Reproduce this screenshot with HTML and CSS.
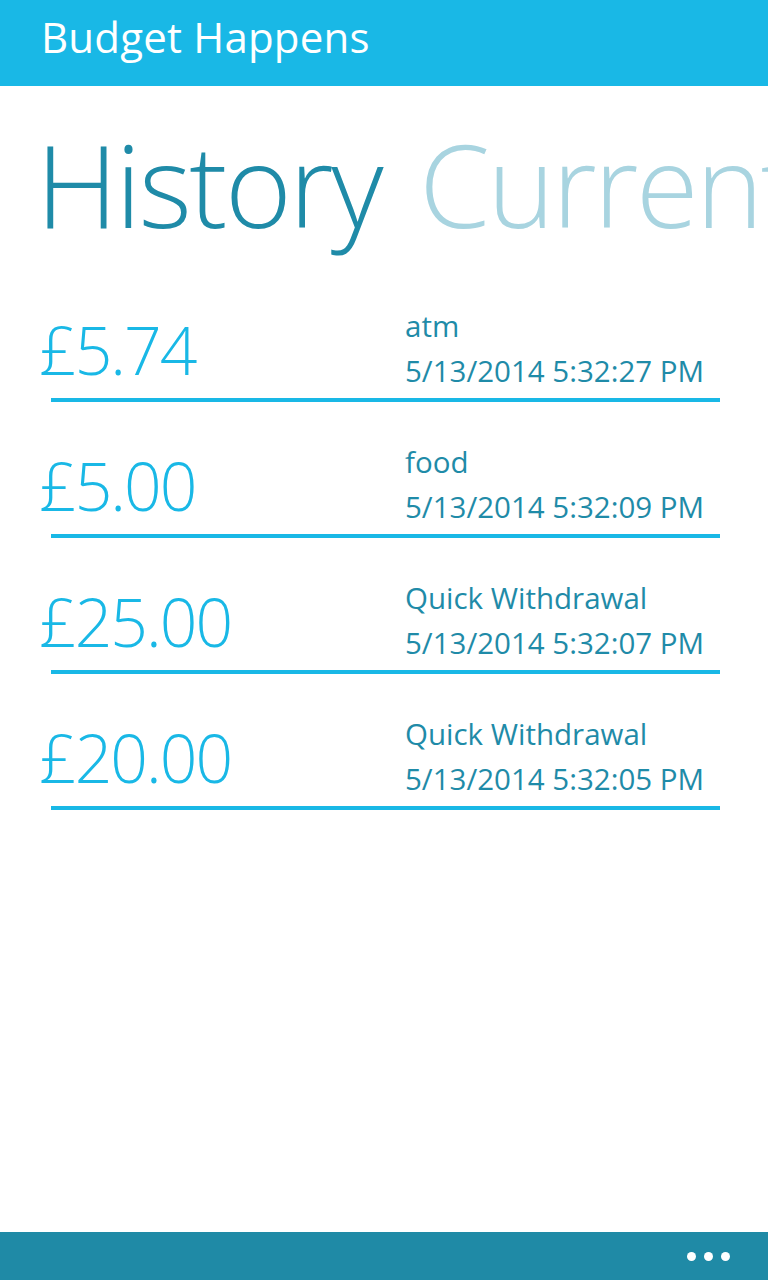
FILE: index.html
```html
<!DOCTYPE html>
<html>
<head>
<meta charset="utf-8">
<link rel="stylesheet" href="styles.css">
</head>
<body>
<div class="app">
  <header class="titlebar">Budget Happens</header>
  <div class="pivot">
    <span class="pivot-item active">History</span>
    <span class="pivot-item">Current</span>
  </div>
  <ul class="list">
    <li class="row">
      <div class="amount">£5.74</div>
      <div class="details"><div class="desc">atm</div><div class="date">5/13/2014 5:32:27 PM</div></div>
    </li>
    <li class="row">
      <div class="amount">£5.00</div>
      <div class="details"><div class="desc">food</div><div class="date">5/13/2014 5:32:09 PM</div></div>
    </li>
    <li class="row">
      <div class="amount">£25.00</div>
      <div class="details"><div class="desc">Quick Withdrawal</div><div class="date">5/13/2014 5:32:07 PM</div></div>
    </li>
    <li class="row">
      <div class="amount">£20.00</div>
      <div class="details"><div class="desc">Quick Withdrawal</div><div class="date">5/13/2014 5:32:05 PM</div></div>
    </li>
  </ul>
  <footer class="appbar">
    <span class="dot"></span><span class="dot"></span><span class="dot"></span>
  </footer>
</div>
</body>
</html>
```
FILE: styles.css
```css
html, body {
  margin: 0;
  padding: 0;
  background: #ffffff;
}
body {
  font-family: "Open Sans", "Noto Sans", sans-serif;
}
.app {
  width: 768px;
  height: 1280px;
  display: flex;
  flex-direction: column;
  overflow: hidden;
}
.titlebar {
  height: 86px;
  flex: none;
  background: #19b8e6;
  color: #ffffff;
  font-size: 42px;
  line-height: 74px;
  padding-left: 41px;
  letter-spacing: 0.2px;
  box-sizing: border-box;
}
.pivot {
  flex: none;
  height: 178px;
  padding-left: 36px;
  white-space: nowrap;
  overflow: hidden;
  font-size: 114px;
  font-weight: 300;
  line-height: 196px;
  letter-spacing: -2.5px;
}
.pivot-item {
  color: #a8d4e0;
  margin-right: 11px;
}
.pivot-item.active {
  color: #1f8ba8;
}
.list {
  list-style: none;
  margin: 0;
  padding: 0;
  flex: 1;
}
.row {
  height: 136px;
  display: flex;
  position: relative;
}
.row::after {
  content: "";
  position: absolute;
  left: 51px;
  width: 669px;
  top: 134px;
  height: 4px;
  background: #19b8e6;
}
.amount {
  width: 365px;
  padding-left: 39px;
  box-sizing: border-box;
  flex: none;
  color: #19b8e6;
  font-size: 66px;
  font-weight: 300;
  line-height: 1;
  padding-top: 52px;
  letter-spacing: -2px;
}
.details {
  color: #1f8ba8;
  font-size: 29.5px;
  padding-top: 39px;
  padding-left: 40px;
  white-space: nowrap;
}
.desc, .date {
  line-height: 45px;
}
.appbar {
  height: 48px;
  flex: none;
  background: #1f8aa6;
  display: flex;
  justify-content: flex-end;
  align-items: center;
  gap: 8px;
  padding-right: 38px;
}
.dot {
  width: 9px;
  height: 9px;
  border-radius: 50%;
  background: #ffffff;
}
```
